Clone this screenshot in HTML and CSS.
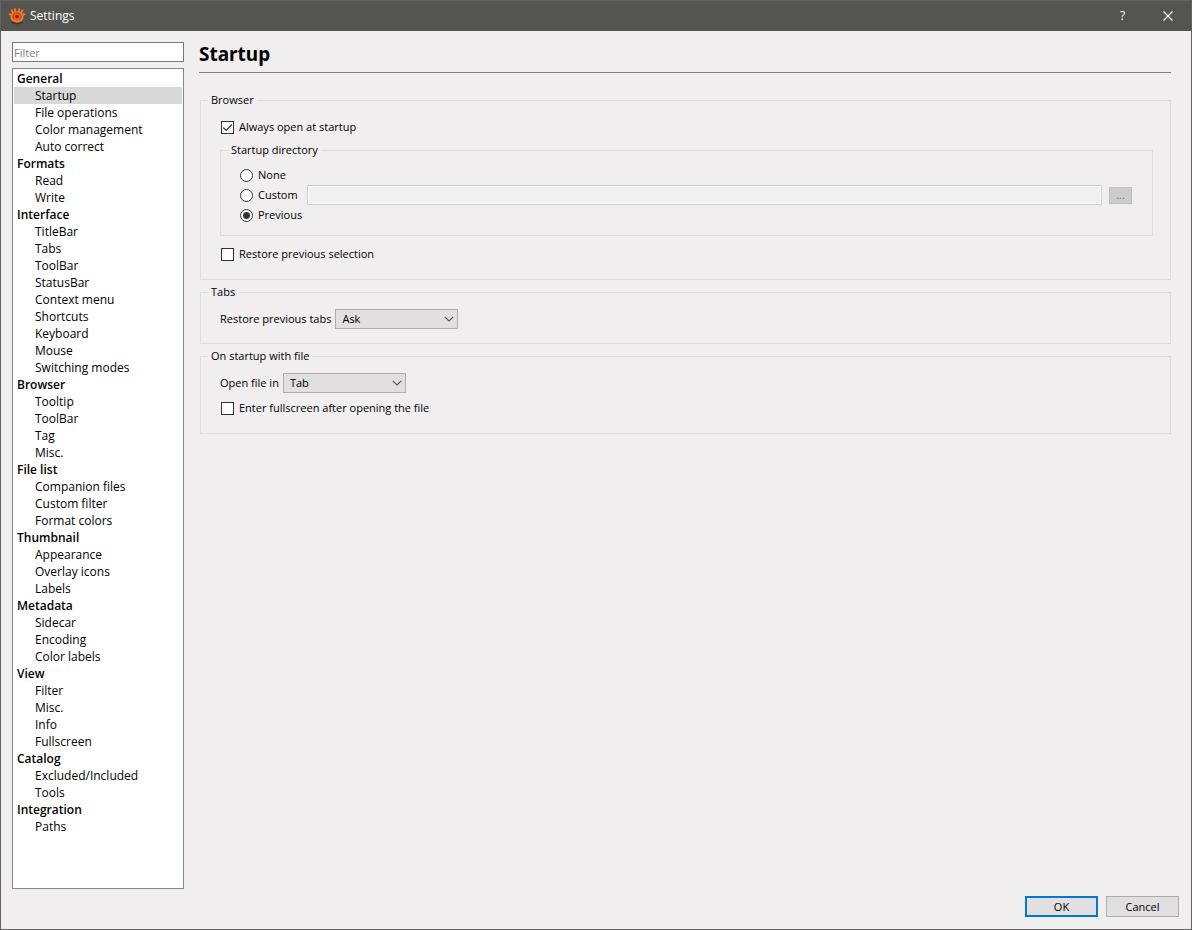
FILE: index.html
```html
<!DOCTYPE html>
<html lang="en">
<head>
<meta charset="utf-8">
<title>Settings</title>
<link rel="stylesheet" href="styles.css">
</head>
<body>
<div class="window">
  <header class="titlebar">
    <svg class="app-icon" viewBox="0 0 18 18" aria-hidden="true">
      <ellipse cx="9" cy="15.5" rx="6" ry="1.8" fill="#3c3936"/>
      <path d="M4.8 5.6 3.7 3.4M7.3 4.4 7 2.2M10.9 4.4 11.3 2.2M13.3 5.6 14.6 3.4M3.2 8 1.6 7.2M14.9 8 16.4 7.2" stroke="#f47b20" stroke-width="2" stroke-linecap="round"/>
      <ellipse cx="9" cy="10" rx="6.6" ry="5.7" fill="#f47b20"/>
      <ellipse cx="9" cy="9.4" rx="4.6" ry="3.9" fill="#7d4a30"/>
      <circle cx="9" cy="9.8" r="3.6" fill="#ee5f2c"/>
      <circle cx="9" cy="9.6" r="1.9" fill="#b80f06"/>
    </svg>
    <span class="title">Settings</span>
    <button class="caption-button" type="button" aria-label="Help">?</button>
    <button class="caption-button" type="button" aria-label="Close">
      <svg class="close-icon" viewBox="0 0 10 10" aria-hidden="true"><path d="M.5.5l9 9M9.5.5l-9 9" stroke="#fff" stroke-width="1.2"/></svg>
    </button>
  </header>
  <div class="body">
    <nav class="sidebar">
      <input class="filter" type="text" placeholder="Filter" aria-label="Filter">
      <ul class="tree">
        <li class="group">General</li>
        <li class="item selected">Startup</li>
        <li class="item">File operations</li>
        <li class="item">Color management</li>
        <li class="item">Auto correct</li>
        <li class="group">Formats</li>
        <li class="item">Read</li>
        <li class="item">Write</li>
        <li class="group">Interface</li>
        <li class="item">TitleBar</li>
        <li class="item">Tabs</li>
        <li class="item">ToolBar</li>
        <li class="item">StatusBar</li>
        <li class="item">Context menu</li>
        <li class="item">Shortcuts</li>
        <li class="item">Keyboard</li>
        <li class="item">Mouse</li>
        <li class="item">Switching modes</li>
        <li class="group">Browser</li>
        <li class="item">Tooltip</li>
        <li class="item">ToolBar</li>
        <li class="item">Tag</li>
        <li class="item">Misc.</li>
        <li class="group">File list</li>
        <li class="item">Companion files</li>
        <li class="item">Custom filter</li>
        <li class="item">Format colors</li>
        <li class="group">Thumbnail</li>
        <li class="item">Appearance</li>
        <li class="item">Overlay icons</li>
        <li class="item">Labels</li>
        <li class="group">Metadata</li>
        <li class="item">Sidecar</li>
        <li class="item">Encoding</li>
        <li class="item">Color labels</li>
        <li class="group">View</li>
        <li class="item">Filter</li>
        <li class="item">Misc.</li>
        <li class="item">Info</li>
        <li class="item">Fullscreen</li>
        <li class="group">Catalog</li>
        <li class="item">Excluded/Included</li>
        <li class="item">Tools</li>
        <li class="group">Integration</li>
        <li class="item">Paths</li>
      </ul>
    </nav>
    <main class="page">
      <h1 class="heading">Startup</h1>
      <div class="panels">
        <fieldset class="panel">
          <legend>Browser</legend>
          <div class="panel-body">
            <label class="row"><input class="check" type="checkbox" checked>Always open at startup</label>
            <fieldset class="panel inner">
              <legend>Startup directory</legend>
              <div class="panel-body">
                <label class="row"><input class="radio" type="radio" name="dir">None</label>
                <div class="row">
                  <label class="row"><input class="radio" type="radio" name="dir">Custom</label>
                  <input class="path" type="text" aria-label="Custom directory" disabled>
                  <button class="browse" type="button" aria-label="Choose directory" disabled>...</button>
                </div>
                <label class="row"><input class="radio" type="radio" name="dir" checked>Previous</label>
              </div>
            </fieldset>
            <label class="row"><input class="check" type="checkbox">Restore previous selection</label>
          </div>
        </fieldset>
        <fieldset class="panel compact">
          <legend>Tabs</legend>
          <div class="panel-body">
            <div class="row"><label for="restore">Restore previous tabs</label><select class="combo" id="restore"><option>Ask</option></select></div>
          </div>
        </fieldset>
        <fieldset class="panel">
          <legend>On startup with file</legend>
          <div class="panel-body">
            <div class="row"><label for="openin">Open file in</label><select class="combo" id="openin"><option>Tab</option></select></div>
            <label class="row"><input class="check" type="checkbox">Enter fullscreen after opening the file</label>
          </div>
        </fieldset>
      </div>
    </main>
  </div>
  <footer class="actions">
    <button class="button primary" type="button">OK</button>
    <button class="button" type="button">Cancel</button>
  </footer>
</div>
</body>
</html>
```
FILE: styles.css
```css
* { box-sizing: border-box; }

body {
  margin: 0;
  background: #f0eeef;
  color: #000;
  font: 11px/16px "Open Sans", "Noto Sans", sans-serif;
}

input, button, select { margin: 0; font: inherit; color: inherit; border-radius: 0; }

.window {
  display: flex;
  flex-direction: column;
  min-height: 100vh;
  border: 1px solid #626262;
}

.titlebar {
  display: flex;
  align-items: center;
  height: 30px;
  padding: 0 1px 0 7px;
  background: #545451;
  color: #fff;
  font-size: 12px;
}
.app-icon { width: 18px; height: 18px; }
.title { flex: 1; margin-left: 4px; }
.caption-button {
  display: flex;
  align-items: center;
  justify-content: center;
  width: 45px;
  height: 30px;
  padding: 0;
  border: 0;
  background: none;
}
.close-icon { width: 10px; height: 10px; }

.body {
  display: flex;
  flex: 1;
  gap: 15px;
  padding: 11px 20px 0 11px;
}

.sidebar {
  display: flex;
  flex-direction: column;
  flex: none;
  gap: 6px;
  width: 172px;
}
.filter {
  height: 20px;
  padding: 0 1px;
  border: 1px solid #7a7a7a;
  background: #fff;
}
.filter::placeholder { color: #7f7f7f; }

.tree {
  flex: 1;
  margin: 0;
  padding: 1px;
  border: 1px solid #828790;
  background: #fff;
  list-style: none;
  font-size: 12px;
  line-height: 17px;
}
.group { padding-left: 3px; font-weight: 600; }
.item { padding-left: 21px; }
.selected { background: #d9d9d9; }

.page { flex: 1; min-width: 0; }
.heading {
  margin: 0;
  padding-bottom: 6px;
  border-bottom: 1px solid #808080;
  font-family: "Noto Sans", sans-serif;
  font-size: 19px;
  line-height: 24px;
  font-weight: 700;
}
.panels {
  display: flex;
  flex-direction: column;
  gap: 4px;
  padding: 19px 0 0 1px;
}

.panel {
  min-width: 0;
  margin: 0;
  padding: 0 17px 15px 19px;
  border: 1px solid #dcdcdc;
}
.panel > legend { margin-left: -12px; padding: 0 3px; }
.panel-body {
  display: flex;
  flex-direction: column;
  padding-top: 9px;
  gap: 5px;
}
.compact { padding-bottom: 14px; }
.inner { padding-bottom: 10px; margin-bottom: 3px; }
.inner .panel-body { padding-top: 7px; gap: 0; }

.row { display: flex; align-items: center; min-height: 20px; }

.check, .radio {
  appearance: none;
  flex: none;
  width: 13px;
  height: 13px;
  margin-right: 5px;
  border: 1px solid #333;
  background: #fff center / 11px 11px no-repeat;
}
.check { margin-left: 1px; }
.check:checked {
  background-image: url("data:image/svg+xml,%3Csvg xmlns='http://www.w3.org/2000/svg' viewBox='0 0 11 11'%3E%3Cpath d='M1.2 5.5l3 3 5.6-6' fill='none' stroke='%23333' stroke-width='1.2'/%3E%3C/svg%3E");
}
.radio { border-radius: 50%; }
.radio:checked { background-image: radial-gradient(circle, #333 3px, transparent 4px); }

.path {
  flex: 1;
  min-width: 0;
  height: 20px;
  margin: 0 7px 0 9px;
  border: 1px solid #ccc;
  background: #f0f0f0;
  box-shadow: inset 0 0 0 1px #fff;
}
.browse {
  width: 23px;
  height: 17px;
  margin-right: 3px;
  padding: 0;
  border: 1px solid #bfbfbf;
  background: #ccc;
  color: #777;
  line-height: 14px;
}

.combo {
  appearance: none;
  width: 123px;
  height: 20px;
  margin-left: 4px;
  padding: 0 20px 0 6px;
  border: 1px solid #adadad;
  background: #e1dfe0 url("data:image/svg+xml,%3Csvg xmlns='http://www.w3.org/2000/svg' viewBox='0 0 10 6'%3E%3Cpath d='M.8.8L5 5 9.2.8' fill='none' stroke='%23555' stroke-width='1.2'/%3E%3C/svg%3E") right 3px center / 10px 6px no-repeat;
}

.actions {
  display: flex;
  justify-content: flex-end;
  gap: 8px;
  padding: 7px 12px 12px;
}
.button {
  width: 73px;
  height: 21px;
  padding: 0;
  border: 1px solid #adadad;
  background: #e1dfe0;
}
.primary { border: 2px solid #0078d7; }
```
